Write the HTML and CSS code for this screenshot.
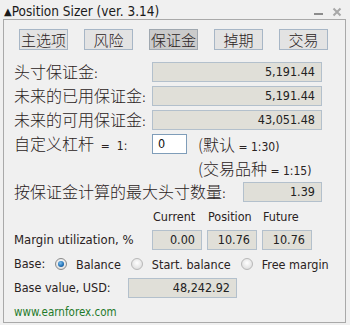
FILE: index.html
```html
<!DOCTYPE html>
<html>
<head>
<meta charset="utf-8">
<link rel="stylesheet" href="styles.css">
</head>
<body>
<div class="window">
  <div class="titlebar">
    <span class="title"><span class="tri">▲</span>Position Sizer (ver. 3.14)</span>
    <span class="controls">
      <svg class="min" width="10" height="10" viewBox="0 0 10 10"><rect x="0" y="6" width="9" height="2" fill="#8c8c8c"/></svg>
      <svg class="close" width="10" height="10" viewBox="0 0 10 10"><path d="M1.5 1.5 L8.5 8.5 M8.5 1.5 L1.5 8.5" stroke="#a8a8a8" stroke-width="2"/></svg>
    </span>
  </div>
  <div class="panel">
    <div class="tabs">
      <div class="tab">主选项</div>
      <div class="tab">风险</div>
      <div class="tab active">保证金</div>
      <div class="tab">掉期</div>
      <div class="tab">交易</div>
    </div>
    <div class="rows">
      <div class="row">
        <span class="label cjk w138">头寸保证金<span class="lat">:</span></span>
        <span class="field wide">5,191.44</span>
      </div>
      <div class="row">
        <span class="label cjk w138">未来的已用保证金<span class="lat">:</span></span>
        <span class="field wide">5,191.44</span>
      </div>
      <div class="row">
        <span class="label cjk w138">未来的可用保证金<span class="lat">:</span></span>
        <span class="field wide">43,051.48</span>
      </div>
      <div class="row">
        <span class="label cjk w138 lev">自定义杠杆<span class="lat"> &nbsp;= &nbsp;1:</span></span>
        <span class="input">0</span>
        <span class="note cjk">(默认<span class="lat"> = 1:30)</span></span>
      </div>
      <div class="row">
        <span class="note cjk indent">(交易品种<span class="lat"> = 1:15)</span></span>
      </div>
      <div class="row">
        <span class="label cjk w229">按保证金计算的最大头寸数量<span class="lat">:</span></span>
        <span class="field short">1.39</span>
      </div>
      <div class="row">
        <span class="label w138"></span>
        <span class="hdr">Current</span>
        <span class="hdr">Position</span>
        <span class="hdr">Future</span>
      </div>
      <div class="row">
        <span class="label lat w138 mu">Margin utilization, %</span>
        <span class="field small">0.00</span>
        <span class="field small">10.76</span>
        <span class="field small">10.76</span>
      </div>
      <div class="row">
        <span class="label lat base">Base:</span>
        <span class="radio on"></span><span class="rlabel lat">Balance</span>
        <span class="radio"></span><span class="rlabel lat">Start. balance</span>
        <span class="radio"></span><span class="rlabel lat">Free margin</span>
      </div>
      <div class="row">
        <span class="label lat w114">Base value, USD:</span>
        <span class="field mid">48,242.92</span>
      </div>
      <div class="row">
        <span class="link lat">www.earnforex.com</span>
      </div>
    </div>
  </div>
</div>
</body>
</html>
```
FILE: styles.css
```css
html, body {
  margin: 0;
  padding: 0;
  background: #f0f0f0;
}
.window {
  width: 350px;
  height: 325px;
  box-sizing: border-box;
  padding: 0 4px 2px 3px;
  display: flex;
  flex-direction: column;
  font-family: "DejaVu Sans Condensed", "Liberation Sans", sans-serif;
  color: #2a2222;
}
.lat {
  font-family: "DejaVu Sans Condensed", "Liberation Sans", sans-serif;
  font-size: 12.5px;
  font-weight: normal;
}
.cjk {
  font-family: "Noto Sans CJK SC", sans-serif;
  font-size: 16px;
  font-weight: 300;
}
.titlebar {
  height: 21px;
  display: flex;
  align-items: center;
  justify-content: space-between;
}
.title {
  font-size: 13.5px;
  color: #1a1a1a;
  margin-left: 1px;
  margin-top: 2px;
}
.tri {
  font-family: "DejaVu Sans", sans-serif;
  font-size: 10px;
  position: relative;
  top: -1px;
}
.controls {
  display: flex;
  gap: 8px;
  margin-right: 4px;
  margin-top: 4px;
}
.panel {
  flex: 1;
  border: 1px solid #a9a9a9;
  padding: 9px 0 0 10px;
}
.tabs {
  display: flex;
  gap: 16px;
  padding-left: 5px;
}
.tab {
  width: 49px;
  height: 21px;
  box-sizing: border-box;
  border: 1px solid #a7b6c6;
  background: #e3e3e3;
  font-family: "Noto Sans CJK SC", sans-serif;
  font-size: 15px;
  font-weight: 300;
  line-height: 19px;
  text-align: center;
  white-space: nowrap;
  overflow: hidden;
  color: #2a2222;
}
.tab.active {
  background: #cbcbcb;
  border-color: #a0a8b0;
}
.rows {
  margin-top: 12px;
  display: flex;
  flex-direction: column;
  gap: 4px;
}
.row {
  height: 20px;
  display: flex;
  align-items: center;
  white-space: nowrap;
}
.label {
  flex: none;
  line-height: 20px;
}
.w138 { width: 138px; }
.w229 { width: 229px; }
.w114 { width: 114px; }
.lev .lat { font-size: 12px; }
.mu { font-size: 13px; }
.field {
  box-sizing: border-box;
  height: 20px;
  border: 1px solid #b3c0cc;
  background: #e0dfd8;
  text-align: right;
  padding-right: 6px;
  font-family: "DejaVu Sans Condensed", "Liberation Sans", sans-serif;
  font-size: 12.5px;
  line-height: 18px;
  color: #222;
}
.field.wide { width: 170px; }
.field.short { width: 79px; }
.field.small { width: 50px; margin-right: 5px; }
.field.mid { width: 109px; }
.input {
  box-sizing: border-box;
  width: 35px;
  height: 20px;
  border: 1px solid #7f9db9;
  background: #fff;
  padding-left: 5px;
  font-size: 12.5px;
  line-height: 18px;
  color: #111;
}
.note {
  margin-left: 11px;
}
.note.indent {
  margin-left: 184px;
}
.note .lat { font-size: 12px; }
.hdr {
  width: 55px;
  font-size: 12.5px;
  padding-left: 1px;
  box-sizing: border-box;
}
.base { width: 41px; }
.radio {
  flex: none;
  width: 12px;
  height: 12px;
  box-sizing: border-box;
  border-radius: 50%;
  border: 1px solid #b8b8b8;
  background: radial-gradient(circle at 50% 40%, #ffffff 0%, #e2e2e2 70%, #d0d0d0 100%);
  margin-right: 9px;
  position: relative;
}
.radio.on {
  border-color: #8a8a8a;
}
.radio.on::after {
  content: "";
  position: absolute;
  left: 2px;
  top: 2px;
  width: 6px;
  height: 6px;
  border-radius: 50%;
  background: radial-gradient(circle at 40% 35%, #7fc0ee 0%, #1d6db3 60%, #0e3f78 100%);
}
.rlabel {
  margin-right: 10px;
}
.link {
  color: #1e7a2a;
  font-size: 11.5px;
}
```
